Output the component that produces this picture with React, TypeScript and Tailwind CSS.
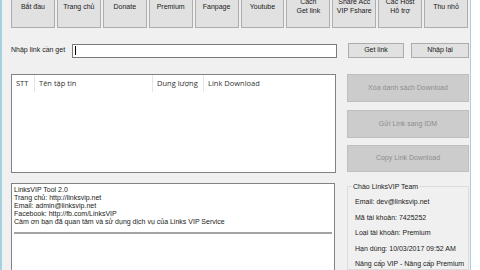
const topButtons: string[][] = [
  ['Bắt đầu'],
  ['Trang chủ'],
  ['Donate'],
  ['Premium'],
  ['Fanpage'],
  ['Youtube'],
  ['Cách', 'Get link'],
  ['Share Acc', 'VIP Fshare'],
  ['Các Host', 'Hỗ trợ'],
  ['Thu nhỏ'],
];

const infoLines = [
  'LinksVIP Tool 2.0',
  'Trang chủ: http://linksvip.net',
  'Email: admin@linksvip.net',
  'Facebook: http://fb.com/LinksVIP',
  'Cảm ơn bạn đã quan tâm và sử dụng dịch vụ của Links VIP Service',
];

const account = [
  'Email: dev@linksvip.net',
  'Mã tài khoản: 7425252',
  'Loại tài khoản: Premium',
  'Hạn dùng: 10/03/2017 09:52 AM',
  'Nâng cấp VIP - Nâng cấp Premium',
];

export default function App() {
  return (
    <div className="w-[480px] h-[270px] overflow-hidden bg-white flex font-['Liberation_Sans',Arial,sans-serif] text-[#1a1a1a]">
      <div className="w-[471px] h-full shrink-0 bg-[#f0f0f0] border-l-2 border-r border-[#a6d1de] pl-[9px] flex flex-col">
        {/* Toolbar */}
        <div className="grid grid-cols-10 gap-[2px] w-[457px] h-[44px] -mt-[16px] shrink-0">
          {topButtons.map((lines) => (
            <div
              key={lines.join()}
              className="bg-[#e1e1e1] border border-[#adadad] flex flex-col items-center justify-center text-[7px] leading-[9px] text-center"
            >
              {lines.map((l) => (
                <span key={l}>{l}</span>
              ))}
            </div>
          ))}
        </div>

        {/* Link input */}
        <div className="flex items-center mt-[15px] h-[15px] shrink-0">
          <span className="text-[7px] w-[61px]">Nhập link cần get</span>
          <div className="w-[265px] h-[14px] bg-white border border-[#7a7a7a] flex items-center pl-[2px]">
            <div className="w-px h-[9px] bg-black" />
          </div>
          <div className="ml-[11px] w-[56px] h-[15px] bg-[#e1e1e1] border border-[#adadad] flex items-center justify-center text-[7px]">
            Get link
          </div>
          <div className="ml-[7px] w-[58px] h-[15px] bg-[#e1e1e1] border border-[#adadad] flex items-center justify-center text-[7px]">
            Nhập lại
          </div>
        </div>

        {/* List + actions */}
        <div className="flex mt-[16px] shrink-0">
          <div className="w-[325px] h-[99px] bg-white border border-[#828282]">
            <div className="flex h-[17px] text-[7.5px] text-[#333] font-['Open_Sans',sans-serif]">
              <div className="w-[23px] pl-[4px] border-r border-[#e5e5e5] flex items-center">STT</div>
              <div className="w-[118px] pl-[4px] border-r border-[#e5e5e5] flex items-center">Tên tập tin</div>
              <div className="w-[51px] pl-[4px] border-r border-[#e5e5e5] flex items-center">Dung lượng</div>
              <div className="flex-1 pl-[4px] flex items-center">Link Download</div>
            </div>
          </div>
          <div className="ml-[11px] w-[122px] flex flex-col">
            <div className="h-[28px] bg-[#cccccc] border border-[#bfbfbf] flex items-center justify-center text-[7px] text-[#8d8d8d]">
              Xóa danh sách Download
            </div>
            <div className="mt-[8px] h-[28px] bg-[#cccccc] border border-[#bfbfbf] flex items-center justify-center text-[7px] text-[#8d8d8d]">
              Gửi Link sang IDM
            </div>
            <div className="mt-[7px] h-[27px] bg-[#cccccc] border border-[#bfbfbf] flex items-center justify-center text-[7px] text-[#8d8d8d]">
              Copy Link Download
            </div>
          </div>
        </div>

        {/* Info + account */}
        <div className="flex mt-[10px] flex-1 min-h-0">
          <div className="w-[324px] h-[100px] bg-white border border-[#828282] px-[2px] pt-[2px] text-[7px] leading-[8px]">
            {infoLines.map((l) => (
              <div key={l}>{l}</div>
            ))}
            <div className="mt-[6px] border-t-2 border-[#a3a3a3]" />
          </div>
          <div className="ml-[12px] w-[122px] relative mt-[3px] border border-[#dcdcdc] pl-[7px] pt-[10px] text-[7px]">
            <span className="absolute -top-[5px] left-[4px] bg-[#f0f0f0] px-[1px] leading-[9px]">Chào LinksVIP Team</span>
            <div className="flex flex-col gap-[6.5px] leading-[9px]">
              {account.map((a) => (
                <div key={a} className="whitespace-nowrap">{a}</div>
              ))}
            </div>
          </div>
        </div>
      </div>
    </div>
  );
}
